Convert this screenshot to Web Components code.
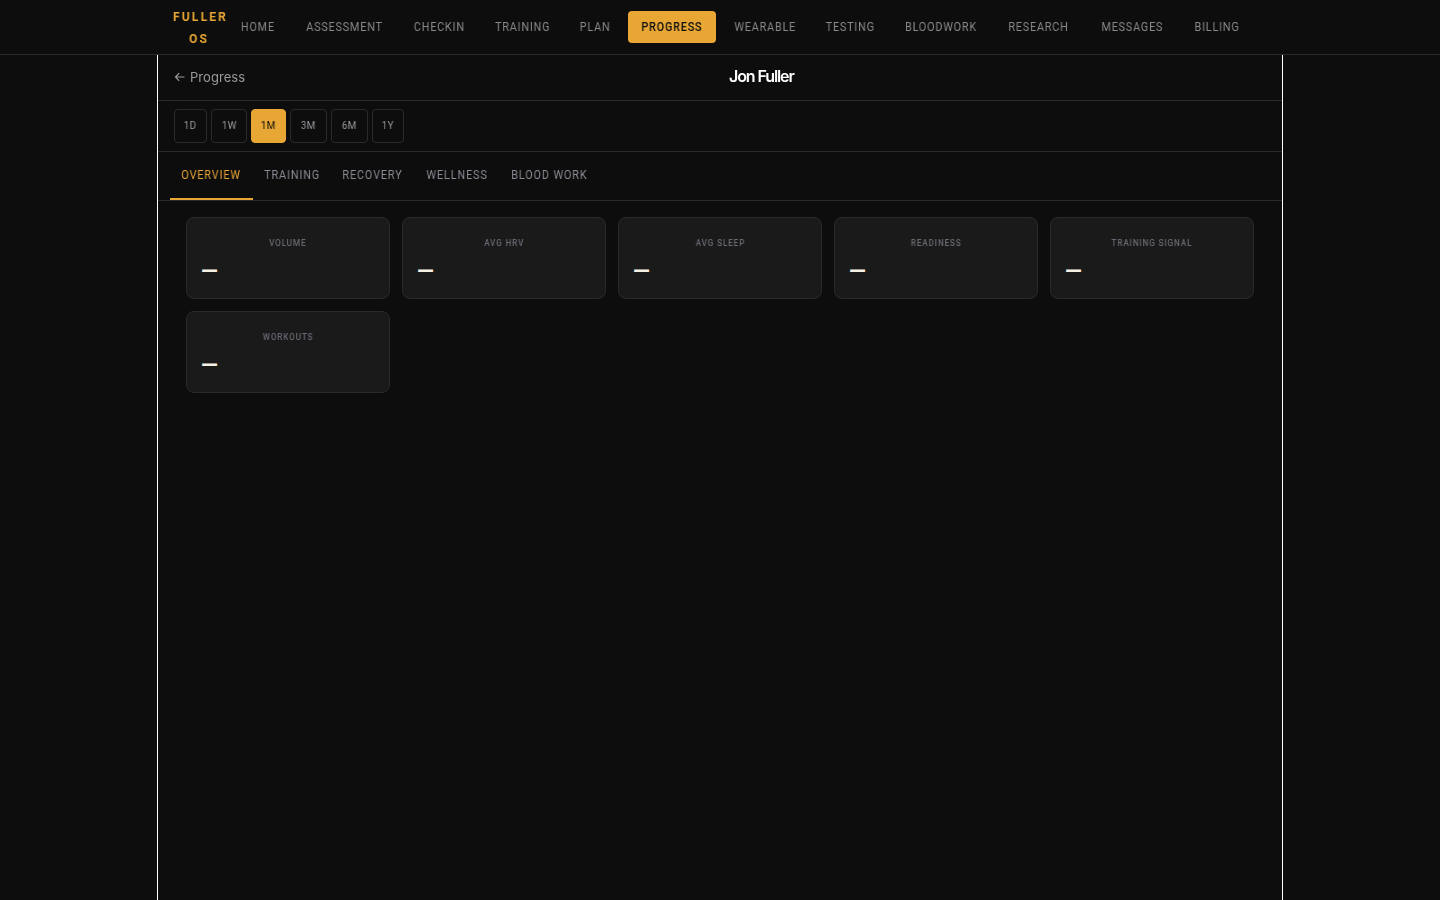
<!DOCTYPE html>
<html>
<head>
<meta charset="utf-8">
<title>Fuller OS</title>
<style>
  html, body { margin: 0; height: 100%; background: #0d0d0d; }
  body { font-family: "Roboto", "Liberation Sans", sans-serif; color: #fff; overflow: hidden; }
</style>
</head>
<body>
<top-nav active="PROGRESS"></top-nav>
<progress-page>
  <page-header slot="header" back="Progress" name="Jon Fuller"></page-header>
  <range-bar slot="range" active="1M"></range-bar>
  <tab-bar slot="tabs" active="OVERVIEW"></tab-bar>
  <stat-grid>
    <stat-card label="VOLUME"></stat-card>
    <stat-card label="AVG HRV"></stat-card>
    <stat-card label="AVG SLEEP"></stat-card>
    <stat-card label="READINESS"></stat-card>
    <stat-card label="TRAINING SIGNAL"></stat-card>
    <stat-card label="WORKOUTS"></stat-card>
  </stat-grid>
</progress-page>

<script>
const NAV = ['HOME', 'ASSESSMENT', 'CHECKIN', 'TRAINING', 'PLAN', 'PROGRESS', 'WEARABLE', 'TESTING', 'BLOODWORK', 'RESEARCH', 'MESSAGES', 'BILLING']
const NAV_W = [60, 105, 76.5, 81.5, 57, 88, 89.5, 74.5, 98.5, 88.5, 90, 71]
const RANGES = [['1D', 33], ['1W', 36], ['1M', 35], ['3M', 37], ['6M', 37], ['1Y', 32]]
const TABS = ['OVERVIEW', 'TRAINING', 'RECOVERY', 'WELLNESS', 'BLOOD WORK']
const TAB_W = [83, 78, 83, 86, 99]
// no condensed face is installed, so narrow the text by hand
const NARROW = 'span{display:inline-block;transform:scaleX(.9);will-change:transform;white-space:nowrap;}'

customElements.define('top-nav', class extends HTMLElement {
  constructor() {
    super()
    const shadow = this.attachShadow({ mode: 'open' })
    const active = this.getAttribute('active')
    shadow.innerHTML = `
    <style>
      ${NARROW}
      :host{
        display:flex;
        box-sizing:border-box;
        height:55px;
        align-items:center;
        padding-left:172px;
        border-bottom:1px solid #2a2a2a;
        background:#0d0d0d;
      }
      .logo{
        width:56px;
        padding-top:1px;
        text-align:center;
        color:#e8a735;
        font:700 13px/22px "Roboto", sans-serif;
        letter-spacing:2.3px;
        transform:translateX(-1px) scaleX(.93);
        will-change:transform;
      }
      nav{
        display:flex;
        gap:4px;
      }
      a{
        box-sizing:border-box;
        height:32px;
        text-align:center;
        border-radius:4px;
        color:#8a8a8a;
        font:400 12px/32px "Roboto", sans-serif;
        letter-spacing:.9px;
      }
      a.on{
        background:#e8a735;
        color:#0d0d0d;
        font-weight:500;
      }
    </style>
    <div class="logo">FULLER OS</div>
    <nav>${NAV.map((n, i) => `<a class="${n === active ? 'on' : ''}" style="width:${NAV_W[i]}px"><span>${n}</span></a>`).join('')}</nav>`
  }
})

customElements.define('progress-page', class extends HTMLElement {
  constructor() {
    super()
    const shadow = this.attachShadow({ mode: 'open' })
    shadow.innerHTML = `
    <style>
      :host{
        display:block;
        box-sizing:border-box;
        width:1126px;
        height:845px;
        margin:0 auto;
        border-left:1px solid #fff;
        border-right:1px solid #fff;
      }
    </style>
    <slot name="header"></slot>
    <slot name="range"></slot>
    <slot name="tabs"></slot>
    <slot></slot>`
  }
})

customElements.define('page-header', class extends HTMLElement {
  constructor() {
    super()
    const shadow = this.attachShadow({ mode: 'open' })
    shadow.innerHTML = `
    <style>
      :host{
        display:flex;
        box-sizing:border-box;
        height:46px;
        align-items:center;
        padding:0 16px 2px;
        border-bottom:1px solid #2a2a2a;
      }
      .back{
        display:flex;
        flex:none;
        align-items:center;
        gap:4px;
        width:71px;
        color:#9a9a9a;
        font:400 13px "Inter", sans-serif;
        letter-spacing:.05px;
        will-change:transform;
      }
      svg{
        flex:none;
        width:12px;
        height:12px;
        fill:none;
        stroke:#9a9a9a;
        stroke-width:1.2;
      }
      .name{
        margin:0 0 2px 484px;
        color:#fff;
        font:600 16px "Inter", sans-serif;
        letter-spacing:-1.1px;
        will-change:transform;
      }
    </style>
    <div class="back">
      <svg viewBox="0 0 12 12"><path d="M10.5 6H1.5M5.2 2.2L1.5 6l3.7 3.8"/></svg>
      <span>${this.getAttribute('back')}</span>
    </div>
    <div class="name">${this.getAttribute('name')}</div>`
  }
})

customElements.define('range-bar', class extends HTMLElement {
  constructor() {
    super()
    const shadow = this.attachShadow({ mode: 'open' })
    const active = this.getAttribute('active')
    shadow.innerHTML = `
    <style>
      ${NARROW}
      :host{
        display:flex;
        box-sizing:border-box;
        height:51px;
        gap:4px;
        padding:8px 16px 0;
        border-bottom:1px solid #2a2a2a;
      }
      button{
        box-sizing:border-box;
        height:34px;
        padding:0 0 1px;
        background:transparent;
        border:1px solid #2a2a2a;
        border-radius:4px;
        color:#9a9a9f;
        font:400 11px "Roboto", sans-serif;
        letter-spacing:.3px;
      }
      button.on{
        background:#e8a735;
        border-color:#e8a735;
        color:#0d0d0d;
      }
    </style>
    ${RANGES.map(([r, w]) => `<button class="${r === active ? 'on' : ''}" style="width:${w}px"><span>${r}</span></button>`).join('')}`
  }
})

customElements.define('tab-bar', class extends HTMLElement {
  constructor() {
    super()
    const shadow = this.attachShadow({ mode: 'open' })
    const active = this.getAttribute('active')
    shadow.innerHTML = `
    <style>
      ${NARROW}
      :host{
        display:flex;
        box-sizing:border-box;
        height:49px;
        padding:0 12px;
        border-bottom:1px solid #2a2a2a;
      }
      a{
        box-sizing:border-box;
        height:48px;
        margin-bottom:-1px;
        text-align:center;
        color:#8c8c96;
        font:400 12px/46px "Roboto", sans-serif;
        letter-spacing:1px;
      }
      a.on{
        color:#e8a735;
        border-bottom:2px solid #e8a735;
      }
    </style>
    ${TABS.map((t, i) => `<a class="${t === active ? 'on' : ''}" style="width:${TAB_W[i]}px"><span>${t}</span></a>`).join('')}`
  }
})

customElements.define('stat-grid', class extends HTMLElement {
  constructor() {
    super()
    const shadow = this.attachShadow({ mode: 'open' })
    shadow.innerHTML = `
    <style>
      :host{
        display:grid;
        grid-template-columns:repeat(5, 1fr);
        gap:12px;
        padding:16px 28px;
      }
    </style>
    <slot></slot>`
  }
})

customElements.define('stat-card', class extends HTMLElement {
  constructor() {
    super()
    const shadow = this.attachShadow({ mode: 'open' })
    shadow.innerHTML = `
    <style>
      ${NARROW}
      :host{
        display:block;
        box-sizing:border-box;
        height:82px;
        padding:19px 14px 0;
        background:#1a1a1a;
        border:1px solid #2a2a2a;
        border-radius:8px;
      }
      .label{
        text-align:center;
        color:#6a6a74;
        font:500 9px/12px "Roboto", sans-serif;
        letter-spacing:1px;
      }
      .value{
        margin-top:11px;
        color:#f5f0e6;
        font:700 22px/24px "Roboto", sans-serif;
      }
    </style>
    <div class="label"><span>${this.getAttribute('label')}</span></div>
    <div class="value">—</div>`
  }
})
</script>
</body>
</html>
